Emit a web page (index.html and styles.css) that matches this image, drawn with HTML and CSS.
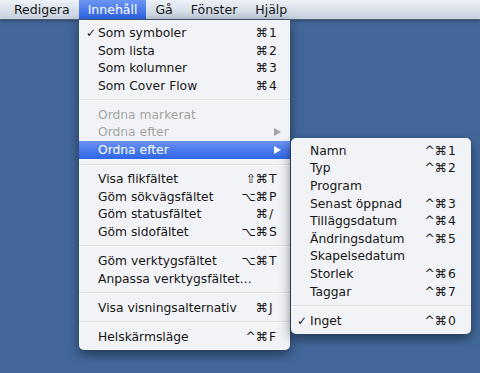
FILE: index.html
```html
<!DOCTYPE html>
<html lang="sv">
<head>
  <meta charset="UTF-8" />
  <meta name="viewport" content="width=device-width, initial-scale=1.0"/>
  <title>Innehåll</title>
  <link rel="stylesheet" href="styles.css">
</head>
<body>

<div class="menubar">
  <span class="bar-item">Redigera</span>
  <span class="bar-item active">Innehåll</span>
  <span class="bar-item">Gå</span>
  <span class="bar-item">Fönster</span>
  <span class="bar-item">Hjälp</span>
</div>

<div class="desktop"></div>

<div class="menu main-menu">
  <div class="row"><span class="check">✓</span><span class="label">Som symboler</span><span class="mods">⌘</span><span class="key">1</span></div>
  <div class="row"><span class="check"></span><span class="label">Som lista</span><span class="mods">⌘</span><span class="key">2</span></div>
  <div class="row"><span class="check"></span><span class="label">Som kolumner</span><span class="mods">⌘</span><span class="key">3</span></div>
  <div class="row"><span class="check"></span><span class="label">Som Cover Flow</span><span class="mods">⌘</span><span class="key">4</span></div>
  <div class="sep"></div>
  <div class="row disabled"><span class="check"></span><span class="label">Ordna markerat</span></div>
  <div class="row disabled"><span class="check"></span><span class="label">Ordna efter</span><span class="arrow"></span></div>
  <div class="row selected"><span class="check"></span><span class="label">Ordna efter</span><span class="arrow"></span></div>
  <div class="sep"></div>
  <div class="row"><span class="check"></span><span class="label">Visa flikfältet</span><span class="mods">⇧⌘</span><span class="key">T</span></div>
  <div class="row"><span class="check"></span><span class="label">Göm sökvägsfältet</span><span class="mods">⌥⌘</span><span class="key">P</span></div>
  <div class="row"><span class="check"></span><span class="label">Göm statusfältet</span><span class="mods">⌘</span><span class="key">/</span></div>
  <div class="row"><span class="check"></span><span class="label">Göm sidofältet</span><span class="mods">⌥⌘</span><span class="key">S</span></div>
  <div class="sep"></div>
  <div class="row"><span class="check"></span><span class="label">Göm verktygsfältet</span><span class="mods">⌥⌘</span><span class="key">T</span></div>
  <div class="row"><span class="check"></span><span class="label">Anpassa verktygsfältet…</span></div>
  <div class="sep"></div>
  <div class="row"><span class="check"></span><span class="label">Visa visningsalternativ</span><span class="mods">⌘</span><span class="key">J</span></div>
  <div class="sep"></div>
  <div class="row"><span class="check"></span><span class="label">Helskärmsläge</span><span class="mods">^⌘</span><span class="key">F</span></div>
</div>

<div class="menu sub-menu">
  <div class="row"><span class="check"></span><span class="label">Namn</span><span class="mods">^⌘</span><span class="key">1</span></div>
  <div class="row"><span class="check"></span><span class="label">Typ</span><span class="mods">^⌘</span><span class="key">2</span></div>
  <div class="row"><span class="check"></span><span class="label">Program</span></div>
  <div class="row"><span class="check"></span><span class="label">Senast öppnad</span><span class="mods">^⌘</span><span class="key">3</span></div>
  <div class="row"><span class="check"></span><span class="label">Tilläggsdatum</span><span class="mods">^⌘</span><span class="key">4</span></div>
  <div class="row"><span class="check"></span><span class="label">Ändringsdatum</span><span class="mods">^⌘</span><span class="key">5</span></div>
  <div class="row"><span class="check"></span><span class="label">Skapelsedatum</span></div>
  <div class="row"><span class="check"></span><span class="label">Storlek</span><span class="mods">^⌘</span><span class="key">6</span></div>
  <div class="row"><span class="check"></span><span class="label">Taggar</span><span class="mods">^⌘</span><span class="key">7</span></div>
  <div class="sep"></div>
  <div class="row"><span class="check">✓</span><span class="label">Inget</span><span class="mods">^⌘</span><span class="key">0</span></div>
</div>

</body>
</html>
```

FILE: styles.css
```css
:root {
  --desk: #42689b;
  --menu-bg: rgba(246, 246, 248, 0.98);
  --text: #161616;
  --disabled: #a4a4a6;
  --row-h: 17.6px;
}
body {
  margin: 0;
  height: 373px;
  overflow: hidden;
  background: var(--desk);
  font-family: 'DejaVu Sans', sans-serif;
  font-size: 12.3px;
  color: var(--text);
}
.menubar {
  display: flex;
  height: 19px;
  padding-left: 5px;
  background: linear-gradient(#eef2f8, #c5d0de);
  border-bottom: 1px solid #4d5e78;
  box-shadow: 0 1px 4px rgba(0,0,0,0.35);
}
.bar-item {
  padding: 0 9px;
  line-height: 19px;
  font-size: 12.5px;
}
.bar-item.active {
  color: #fff;
  background: linear-gradient(#6d95f2, #2c62e4);
}
.desktop {
  height: 353px;
}
.menu {
  position: absolute;
  background: var(--menu-bg);
  box-shadow: 0 4px 12px rgba(0,0,0,0.5);
}
.main-menu {
  left: 79px;
  top: 20px;
  width: 211px;
  padding: 4.2px 0;
  border-radius: 0 0 5px 5px;
}
.sub-menu {
  left: 291px;
  top: 138px;
  width: 180px;
  padding: 4px 0 5px;
  border-radius: 5px;
}
.row {
  display: flex;
  align-items: center;
  height: var(--row-h);
  padding-right: 11px;
  white-space: nowrap;
}
.sub-menu .row {
  padding-right: 13px;
}
.check {
  width: 19px;
  flex-shrink: 0;
  padding-left: 7px;
  box-sizing: border-box;
  font-size: 12px;
}
.sub-menu .check {
  padding-left: 6px;
}
.label {
  flex: 1;
}
.mods {
  text-align: right;
}
.key {
  width: 10px;
  padding-left: 1px;
}
.disabled {
  color: var(--disabled);
}
.selected {
  color: #fff;
  background: linear-gradient(#6a92f3, #2f64e6);
}
.arrow {
  width: 0;
  height: 0;
  margin-right: -2px;
  border-top: 4px solid transparent;
  border-bottom: 4px solid transparent;
  border-left: 7px solid var(--disabled);
}
.selected .arrow {
  border-left-color: #fff;
}
.sep {
  height: 11.5px;
  display: flex;
  align-items: center;
}
.sep::after {
  content: "";
  flex: 1;
  height: 1px;
  background: #dedee0;
  border-bottom: 1px solid #fdfdfd;
}
```
